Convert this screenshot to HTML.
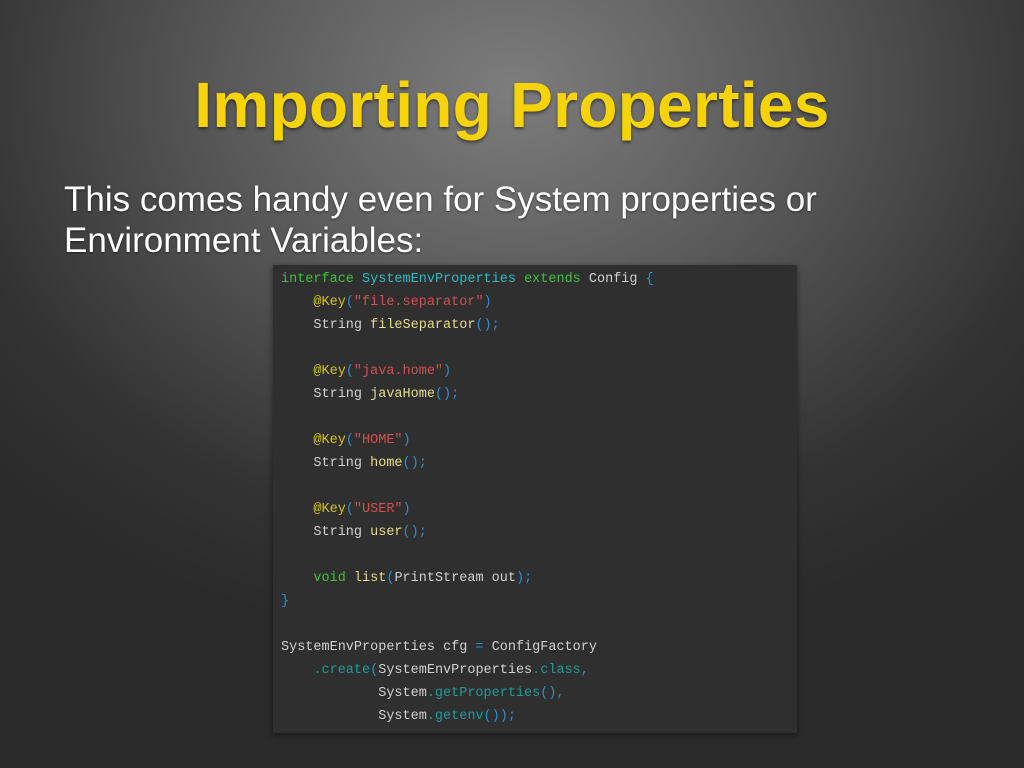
<!DOCTYPE html>
<html><head><style>
body{margin:0;width:1024px;height:768px;overflow:hidden;background:radial-gradient(ellipse 700px 560px at 512px 90px,#7d7d7d 0%,#555 45%,#333 80%,#2b2b2b 100%);font-family:"Liberation Sans",sans-serif;position:relative}
h1{position:absolute;top:68px;left:0;width:1024px;text-align:center;margin:0;font-size:64px;font-weight:bold;color:#f7d30a;text-shadow:0 2px 3px rgba(0,0,0,.5);letter-spacing:0.3px}
.t{position:absolute;left:64px;top:179px;color:#fff;font-size:35px;line-height:41px;text-shadow:0 1px 2px rgba(0,0,0,.5)}
pre{position:absolute;left:273px;top:265px;width:524px;height:468px;margin:0;background:#2f2f2f;box-shadow:0 2px 6px rgba(0,0,0,.5);box-sizing:border-box;padding:3px 0 0 8px;font-family:"Liberation Mono",monospace;font-size:13.5px;line-height:23px;color:#d0d0d0}
.k{color:#3cc23c}.c{color:#2bbcc4}.a{color:#d6c21e}.s{color:#d05050}.p{color:#2a8fd0}.f{color:#e6dc8a}.m{color:#1f9a9a}
</style></head><body>
<h1>Importing Properties</h1>
<div class="t">This comes handy even for System properties or<br>Environment Variables:</div>
<pre><span class="k">interface</span> <span class="c">SystemEnvProperties</span> <span class="k">extends</span> Config <span class="p">{</span>
    <span class="a">@Key</span><span class="p">(</span><span class="s">"file.separator"</span><span class="p">)</span>
    String <span class="f">fileSeparator</span><span class="p">();</span>

    <span class="a">@Key</span><span class="p">(</span><span class="s">"java.home"</span><span class="p">)</span>
    String <span class="f">javaHome</span><span class="p">();</span>

    <span class="a">@Key</span><span class="p">(</span><span class="s">"HOME"</span><span class="p">)</span>
    String <span class="f">home</span><span class="p">();</span>

    <span class="a">@Key</span><span class="p">(</span><span class="s">"USER"</span><span class="p">)</span>
    String <span class="f">user</span><span class="p">();</span>

    <span class="k">void</span> <span class="f">list</span><span class="p">(</span>PrintStream out<span class="p">);</span>
<span class="p">}</span>

SystemEnvProperties cfg <span class="p">=</span> ConfigFactory
    <span class="m">.create</span><span class="p">(</span>SystemEnvProperties<span class="m">.class</span><span class="p">,</span>
            System<span class="m">.getProperties</span><span class="p">(),</span>
            System<span class="m">.getenv</span><span class="p">());</span></pre>
</body></html>
